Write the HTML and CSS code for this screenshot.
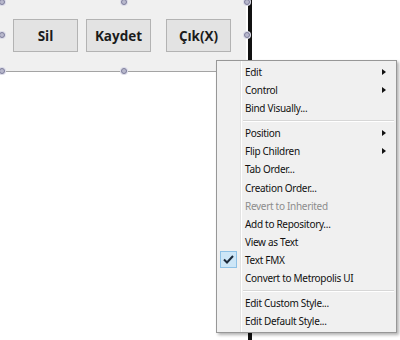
FILE: index.html
```html
<!DOCTYPE html>
<html>
<head>
    <title>Form Designer</title>
    <link rel="stylesheet" href="styles.css">
</head>
<body>
    <div class="stage">
        <div class="form-area">
            <!-- Selected panel with three buttons -->
            <div class="panel">
                <button class="btn">Sil</button>
                <button class="btn">Kaydet</button>
                <button class="btn btn-exit">Çık(X)</button>
                <span class="handle h-tl"></span>
                <span class="handle h-tm"></span>
                <span class="handle h-tr"></span>
                <span class="handle h-ml"></span>
                <span class="handle h-mr"></span>
                <span class="handle h-bl"></span>
                <span class="handle h-bm"></span>
                <span class="handle h-br"></span>
            </div>
        </div>
        <div class="form-edge"></div>
    </div>

    <!-- Context menu -->
    <div class="menu">
        <div class="item">Edit<span class="arrow"></span></div>
        <div class="item">Control<span class="arrow"></span></div>
        <div class="item">Bind Visually...</div>
        <div class="sep"></div>
        <div class="item">Position<span class="arrow"></span></div>
        <div class="item">Flip Children<span class="arrow"></span></div>
        <div class="item">Tab Order...</div>
        <div class="item">Creation Order...</div>
        <div class="item disabled">Revert to Inherited</div>
        <div class="item">Add to Repository...</div>
        <div class="item">View as Text</div>
        <div class="item">
            <span class="check">
                <svg width="11" height="9" viewBox="0 0 11 9"><path d="M1 4.5 L4 7.5 L10 1" fill="none" stroke="#1c2a3a" stroke-width="2"/></svg>
            </span>
            Text FMX
        </div>
        <div class="item">Convert to Metropolis UI</div>
        <div class="sep"></div>
        <div class="item">Edit Custom Style...</div>
        <div class="item">Edit Default Style...</div>
    </div>
</body>
</html>
```

FILE: styles.css
```css
body {
    margin: 0;
    background: #ffffff;
    font-family: "Noto Sans", sans-serif;
    position: relative;
    width: 400px;
    height: 340px;
    overflow: hidden;
}

.stage {
    display: flex;
    height: 340px;
}

.form-area {
    width: 248px;
}

/* thick black edge of the form */
.form-edge {
    width: 4px;
    background: #111;
}

.panel {
    position: relative;
    box-sizing: border-box;
    width: 246px;
    height: 72px;
    background: #f0f0f0;
    border-bottom: 1px solid #a4a4a4;
    display: flex;
    align-items: flex-start;
    padding: 19px 0 0 13px;
    gap: 8px;
}

.btn {
    width: 65px;
    height: 33px;
    background: #e3e3e3;
    border: 1px solid #b3b3b3;
    border-radius: 0;
    font-family: "Open Sans", sans-serif;
    font-weight: bold;
    font-size: 13.5px;
    color: #1b1b1b;
    padding: 0;
}

.btn-exit {
    margin-left: 7px;
}

/* selection grab handles */
.handle {
    position: absolute;
    width: 4px;
    height: 4px;
    border: 1px solid #7e7e9c;
    border-radius: 50%;
    background: #b8b8cc;
    box-shadow: 0 0 0 1px #dcdce8;
    margin: -3px 0 0 -3px;
}
.h-tl { left: 2px; top: 2px; }
.h-tm { left: 124px; top: 2px; }
.h-tr { left: 247px; top: 2px; }
.h-ml { left: 2px; top: 35px; }
.h-mr { left: 247px; top: 35px; }
.h-bl { left: 2px; top: 71px; }
.h-bm { left: 124px; top: 71px; }
.h-br { left: 247px; top: 71px; }

.menu {
    position: absolute;
    left: 216px;
    top: 60px;
    width: 179px;
    padding: 2px 0;
    background: #f0f0f0;
    border: 1px solid #979797;
    box-shadow: 2px 2px 3px rgba(0, 0, 0, 0.3);
    background-image: linear-gradient(90deg, transparent 23px, #e2e2e2 23px, #e2e2e2 24px, #ffffff 24px, #ffffff 25px, transparent 25px);
}

.item {
    position: relative;
    height: 18.1px;
    line-height: 18.1px;
    padding-left: 28px;
    font-size: 10px;
    letter-spacing: -0.3px;
    color: #111;
}

.item.disabled {
    color: #8d8d8d;
}

.arrow {
    position: absolute;
    right: 10px;
    top: 6px;
    border-left: 4px solid #111;
    border-top: 3.5px solid transparent;
    border-bottom: 3.5px solid transparent;
}

.sep {
    height: 1px;
    margin: 3px 2px 2px 26px;
    background: #d7d7d7;
    border-bottom: 1px solid #ffffff;
}

.check {
    position: absolute;
    left: 3px;
    top: 0;
    width: 17px;
    height: 17px;
    box-sizing: border-box;
    background: #cde6f7;
    border: 1px solid #8ec1e6;
    display: flex;
    align-items: center;
    justify-content: center;
}
```
